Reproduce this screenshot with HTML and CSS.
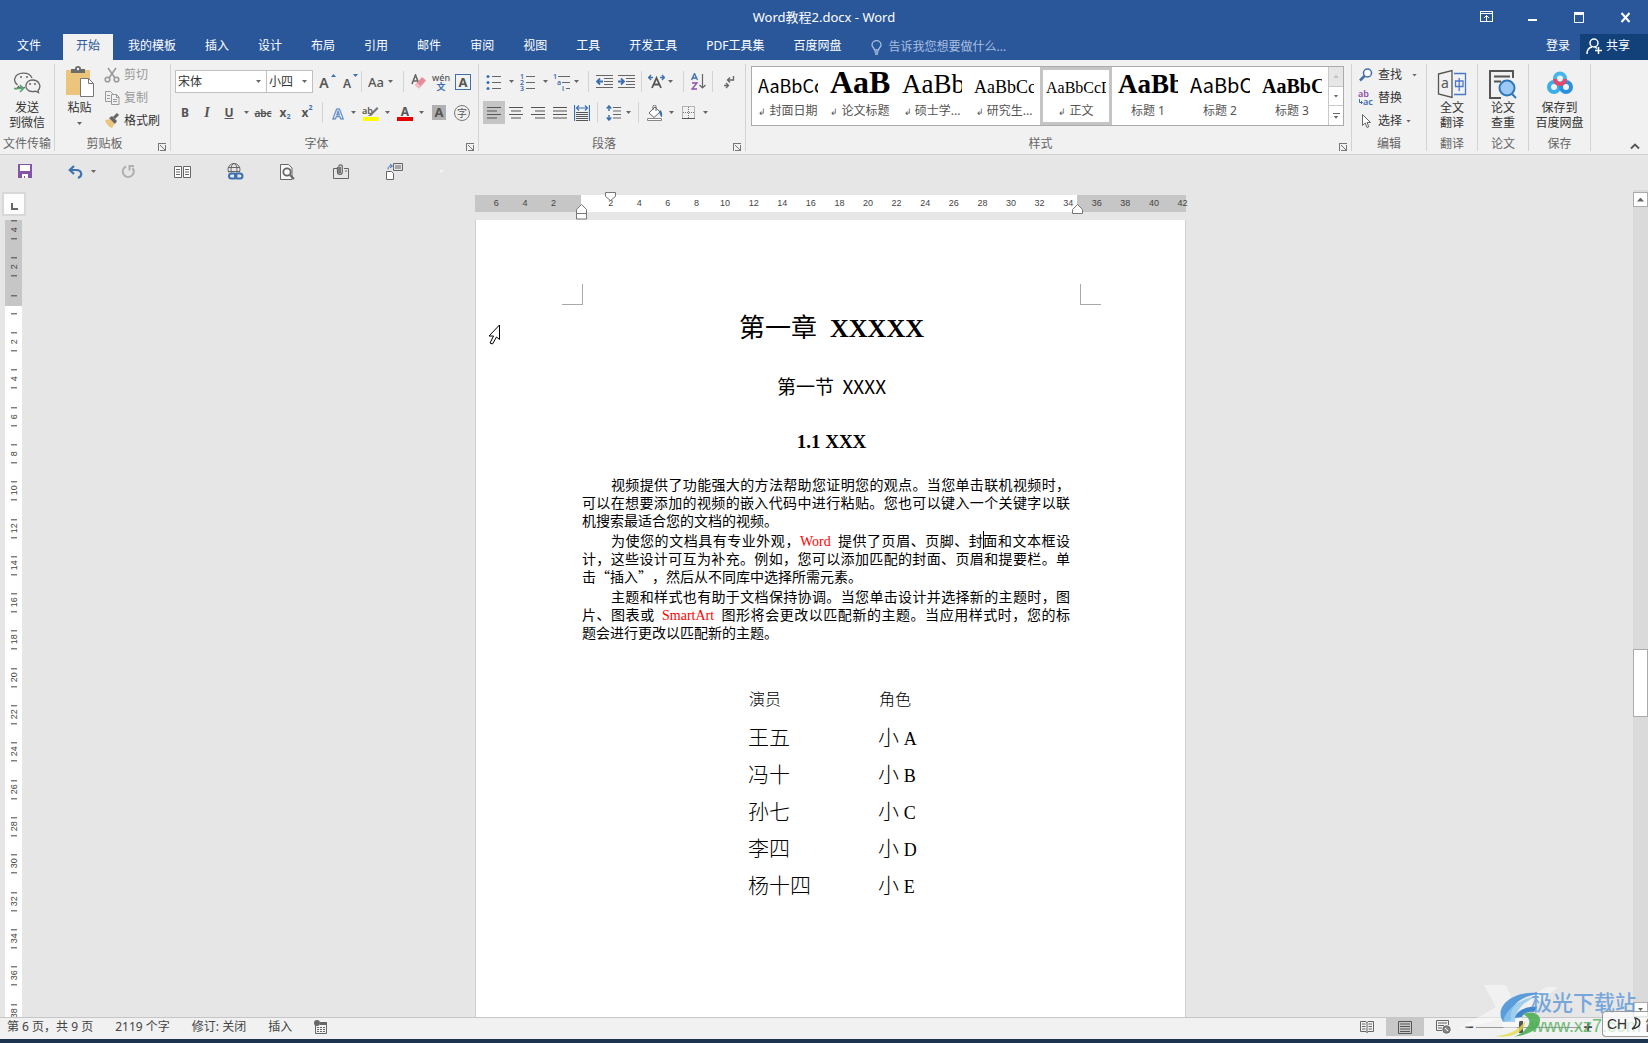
FILE: index.html
```html
<!DOCTYPE html>
<html lang="zh-CN">
<head>
<meta charset="utf-8">
<title>Word教程2.docx - Word</title>
<link rel="stylesheet" href="styles.css">
</head>
<body>
<header class="top">
  <div class="titlebar">
    <span></span>
    <h1 class="title">Word教程2.docx - Word</h1>
    <div class="winbtns">
      <button aria-label="功能区显示选项"><svg width="14" height="12" viewBox="0 0 14 12" fill="none" stroke="#fff"><rect x=".5" y=".5" width="12" height="10"/><path d="M1 2.500h11M6.500 10V4.500M4 7l2.500-2.500L9 7"/></svg></button>
      <button aria-label="最小化"><svg width="10" height="12" viewBox="0 0 10 12"><path d="M0 8h9v2H0z" fill="#fff"/></svg></button>
      <button aria-label="最大化"><svg width="11" height="11" viewBox="0 0 11 11"><path d="M.5 1.500h9v9h-9z" fill="none" stroke="#fff"/><path d="M0 0h10v3H0z" fill="#fff"/></svg></button>
      <button aria-label="关闭"><svg width="11" height="11" viewBox="0 0 11 11"><path d="M1.500 1l8 9M9.500 1l-8 9" stroke="#fff" stroke-width="2"/></svg></button>
    </div>
  </div>
  <nav class="tabs">
    <button class="tab file">文件</button>
    <button class="tab active">开始</button>
    <button class="tab">我的模板</button>
    <button class="tab">插入</button>
    <button class="tab">设计</button>
    <button class="tab">布局</button>
    <button class="tab">引用</button>
    <button class="tab">邮件</button>
    <button class="tab">审阅</button>
    <button class="tab">视图</button>
    <button class="tab">工具</button>
    <button class="tab">开发工具</button>
    <button class="tab">PDF工具集</button>
    <button class="tab">百度网盘</button>
    <label class="tell">
      <svg width="11" height="15" viewBox="0 0 11 15" fill="none" stroke="#a9bfe0" stroke-width="1.300"><path d="M3.500 10C3.500 8 1 7.500 1 5a4.500 4.300 0 0 1 9 0c0 2.500-2.500 3-2.500 5zM3.500 12h4M4 14h3"/></svg>
      <input type="text" placeholder="告诉我您想要做什么..." aria-label="告诉我您想要做什么">
    </label>
    <button class="login">登录</button>
    <button class="share"><svg width="17" height="17" viewBox="0 0 17 17" fill="none" stroke="#fff" stroke-width="1.500"><circle cx="8" cy="5" r="4"/><path d="M1 16c0-4 2-6.500 5-7M9 9l2 1.500M12.500 9v7M9 12.500h7"/></svg>共享</button>
  </nav>
</header>

<section class="ribbon" aria-label="开始">
  <div class="group g-send">
    <button class="big">
      <svg width="28" height="28" viewBox="0 0 28 28" fill="none" stroke="#666" stroke-width="1.300"><path d="M6 16l-2 2.500 4-1.500c1.500.6 3 .7 4 .5M4.500 15C2 13 1 10.500 2 8c2-6 14-7 17 0"/><path d="M25 20.500c4-4 1-10.500-5.500-10.500-8 0-9 10.500-1 11.500 1.500.2 3 0 4-.4l3 1.400z"/><path d="M1 18.500h9M7 15l3.500 3.500L7 22" stroke="#58a66a" stroke-width="1.500"/><g fill="#666" stroke="none"><circle cx="8" cy="7" r="1"/><circle cx="14" cy="7" r="1"/><circle cx="17" cy="14" r="1"/><circle cx="22" cy="14" r="1"/></g></svg>
      <span>发送<br>到微信</span>
    </button>
    <div class="glabel">文件传输</div>
  </div>

  <div class="group g-clip">
    <div class="gbody">
      <button class="big paste">
        <svg width="30" height="32" viewBox="0 0 30 32"><path d="M1 4h24v25H1z" fill="#ecc57c"/><path d="M6 7V3h4a3 3 0 0 1 6 0h4v4z" fill="#6b6b6b"/><circle cx="13" cy="3" r="1.200" fill="#f1f1f1"/><path d="M15.500 12.500h8l5 5v13h-13z" fill="#fff" stroke="#777"/><path d="M23.500 12.500v5h5" fill="none" stroke="#777"/></svg>
        <span>粘贴</span><i class="caret"></i>
      </button>
      <div class="stack">
        <button class="row dim"><svg width="16" height="16" viewBox="0 0 16 16" fill="none" stroke="#9a9a9a" stroke-width="1.600"><path d="M4 1l7 10M12 1L5 11"/><circle cx="3.500" cy="12.500" r="2.300"/><circle cx="12.500" cy="12.500" r="2.300"/></svg>剪切</button>
        <button class="row dim"><svg width="16" height="16" viewBox="0 0 16 16" fill="none" stroke="#9a9a9a"><path d="M1.500 1.500h5l2 2v8h-7zM3 5.500h3M3 8.500h3"/><path d="M7.500 4.500h5l2.500 2.500v7.500H7.500z" fill="#f1f1f1"/><path d="M9 9.500h4M9 11.500h4M12.500 4.500v3h2.500"/></svg>复制</button>
        <button class="row"><svg width="16" height="16" viewBox="0 0 16 16"><path d="M1 7l6-1 4 4-3 5C5 14 2 11 1 7z" fill="#ecc57c"/><path d="M5 5l3-2 5 5-2 3z" fill="#666"/><path d="M10 5l4-4" stroke="#666" stroke-width="3"/></svg>格式刷</button>
      </div>
    </div>
    <div class="glabel">剪贴板</div><button class="launch" aria-label="剪贴板设置"></button>
  </div>

  <div class="group g-font">
    <div class="tools">
      <div class="trow">
        <span class="combo family"><select aria-label="字体"><option>宋体</option></select></span><span class="combo size"><select aria-label="字号"><option>小四</option></select></span>
        <button class="t w24" aria-label="增大字号"><span class="glyph">A</span><i class="up"></i></button>
        <button class="t" aria-label="减小字号"><span class="glyph sm">A</span><i class="down"></i></button>
        <i class="sep s1"></i>
        <button class="t w20" aria-label="更改大小写"><span class="plain">Aa</span></button><i class="caret c"></i>
        <i class="sep s2"></i>
        <button class="t" aria-label="清除所有格式"><svg width="16" height="16" viewBox="0 0 16 16"><path d="M1 10L4.500 1 8 10M2.500 7h4" fill="none" stroke="#666" stroke-width="1.600"/><path d="M4 11l7-8 4 3.500-7 8z" fill="#e88a9b"/><path d="M4 11l2-2.300 4 3.500-2 2.300z" fill="#f4bcc6"/></svg></button>
        <button class="t pinyin" aria-label="拼音指南"><span>wén</span><b>文</b></button>
        <button class="t" aria-label="字符边框"><span class="boxed">A</span></button>
      </div>
      <div class="trow">
        <button class="t bold">B</button><button class="t ital">I</button><button class="t und">U</button><i class="caret c12"></i>
        <button class="t strike">abc</button><button class="t sub">x<small>2</small></button><button class="t sup">x<small>2</small></button>
        <i class="sep"></i>
        <button class="t fx">A</button><i class="caret c"></i>
        <button class="t w24" aria-label="突出显示"><svg width="18" height="18" viewBox="0 0 18 18"><text x="0" y="10" class="svgt">ab</text><path d="M6 12l9-9 1.500 1.500L9 12z" fill="#777"/><path d="M1 13h16v4H1z" fill="#ff0"/></svg></button><i class="caret c"></i>
        <button class="t w24" aria-label="字体颜色"><span class="fcolor">A</span></button><i class="caret c"></i>
        <button class="t w24" aria-label="字符底纹"><span class="shade">A</span></button>
        <button class="t" aria-label="带圈字符"><span class="ring">字</span></button>
      </div>
    </div>
    <div class="glabel">字体</div><button class="launch" aria-label="字体设置"></button>
  </div>

  <div class="group g-para">
    <div class="tools">
      <div class="trow">
        <button class="t" aria-label="项目符号"><svg width="16" height="16" viewBox="0 0 16 16"><path d="M6 2.500h9M6 8.500h9M6 14.500h9" stroke="#666"/><g fill="#3a6fb0"><circle cx="2" cy="2.500" r="1.500"/><circle cx="2" cy="8.500" r="1.500"/><circle cx="2" cy="14.500" r="1.500"/></g></svg></button><i class="caret c12"></i>
        <button class="t" aria-label="编号"><svg width="16" height="18" viewBox="0 0 16 18"><path d="M6 3.500h9M6 9.500h9M6 15.500h9" stroke="#666"/><g class="nums"><text x="0" y="6">1</text><text x="0" y="12">2</text><text x="0" y="18">3</text></g></svg></button><i class="caret c12"></i>
        <button class="t" aria-label="多级列表"><svg width="18" height="18" viewBox="0 0 18 18"><path d="M5 3.500h12M9 9.500h8M13 15.500h4" stroke="#666"/><g class="nums"><text x="0" y="6">1</text><text x="4" y="12">a</text><text x="9" y="18">i</text></g></svg></button><i class="caret c8"></i>
        <i class="sep s3"></i>
        <button class="t" aria-label="减少缩进"><svg width="17" height="14" viewBox="0 0 17 14"><path d="M0 .5h17M8 3.500h9M8 6.500h9M8 9.500h9M0 12.500h17" stroke="#666"/><path d="M7 6.500H1M4 3.500L1 6.500l3 3" fill="none" stroke="#3a6fb0" stroke-width="1.800"/></svg></button>
        <button class="t" aria-label="增加缩进"><svg width="17" height="14" viewBox="0 0 17 14"><path d="M0 .5h17M8 3.500h9M8 6.500h9M8 9.500h9M0 12.500h17" stroke="#666"/><path d="M0 6.500h6M3 3.500l3 3-3 3" fill="none" stroke="#3a6fb0" stroke-width="1.800"/></svg></button>
        <i class="sep"></i>
        <button class="t w20" aria-label="中文版式"><svg width="17" height="15" viewBox="0 0 17 15" fill="none"><path d="M4 14L8.500 4 13 14M5.500 10.500h6" stroke="#555" stroke-width="1.800"/><path d="M0 3.500h5M3 1L.7 3.500 3 6M12 3.500h5M14 1l2.300 2.500L14 6" stroke="#3a6fb0" stroke-width="1.300"/></svg></button><i class="caret c"></i>
        <i class="sep s3"></i>
        <button class="t w20" aria-label="排序"><svg width="15" height="17" viewBox="0 0 15 17" fill="none"><path d="M.5 7L3.500.5 6.500 7M1.500 5h4" stroke="#3a6fb0" stroke-width="1.300"/><path d="M1 10h5l-5 6h5" stroke="#8b4fa6" stroke-width="1.300"/><path d="M11.500 1v14M8.500 12l3 3 3-3" stroke="#666" stroke-width="1.200"/></svg></button>
        <i class="sep"></i>
        <button class="t w24" aria-label="显示编辑标记"><svg width="12" height="14" viewBox="0 0 12 14" fill="none" stroke="#666" stroke-width="1.300"><path d="M10.500 1v4H4.500M7 2.500L4.500 5 7 7.500M1 10.500h4M3 8l2.500 2.500L3 13"/></svg></button>
      </div>
      <div class="trow">
        <button class="t on" aria-label="左对齐"><svg width="14" height="12" viewBox="0 0 14 12"><path d="M0 .5h14M0 4h10M0 7.500h14M0 11h10" stroke="#555"/></svg></button>
        <button class="t" aria-label="居中"><svg width="14" height="12" viewBox="0 0 14 12"><path d="M0 .5h14M2 4h10M0 7.500h14M2 11h10" stroke="#555"/></svg></button>
        <button class="t" aria-label="右对齐"><svg width="14" height="12" viewBox="0 0 14 12"><path d="M0 .5h14M4 4h10M0 7.500h14M4 11h10" stroke="#555"/></svg></button>
        <button class="t" aria-label="两端对齐"><svg width="14" height="12" viewBox="0 0 14 12"><path d="M0 .5h14M0 4h14M0 7.500h14M0 11h14" stroke="#555"/></svg></button>
        <button class="t" aria-label="分散对齐"><svg width="16" height="16" viewBox="0 0 16 16" fill="none"><path d="M.5 0v16M15.500 0v16M2 3h12M5 .5L2.500 3 5 5.500M11 .5L13.500 3 11 5.500" stroke="#3a6fb0" stroke-width="1.200"/><path d="M2 7.500h12M2 9.500h12M2 11.500h12M2 13.500h12M2 15.500h12" stroke="#555"/></svg></button>
        <i class="sep"></i>
        <button class="t" aria-label="行距"><svg width="15" height="16" viewBox="0 0 15 16" fill="none"><path d="M3 1v5M.7 3.500L3 1l2.300 2.500M3 10v5M.7 12.500L3 15l2.300-2.500" stroke="#3a6fb0" stroke-width="1.500"/><path d="M7 2.500h8M7 6h8M7 9.500h8M7 13h8" stroke="#666"/></svg></button><i class="caret c"></i>
        <i class="sep"></i>
        <button class="t w24" aria-label="底纹"><svg width="16" height="16" viewBox="0 0 16 16"><path d="M2 8l6-6 5 5-6 5.500z" fill="#fff" stroke="#666"/><path d="M6 5V1.500a1.500 1.500 0 0 1 3 0V6" fill="none" stroke="#666"/><path d="M13 5c2 1 2.500 4 2 7-1 0-2-2-3-5z" fill="#3a6fb0"/><path d="M.5 13.500h14v2H.5z" fill="#fff" stroke="#888"/></svg></button><i class="caret c"></i>
        <button class="t w24" aria-label="边框"><svg width="14" height="14" viewBox="0 0 14 14" fill="none" stroke="#777"><path d="M.5.500h12v12H.500zM6.500 1v12M1 6.500h12" stroke-dasharray="1 1"/><path d="M0 12.500h13" stroke="#555"/></svg></button><i class="caret c"></i>
      </div>
    </div>
    <div class="glabel">段落</div><button class="launch" aria-label="段落设置"></button>
  </div>

  <div class="group g-style">
    <div class="gallery">
      <button class="style"><span class="sample"><b class="s-sans18">AaBbCc</b></span><span class="sname"><em>↲</em> 封面日期</span></button>
      <button class="style"><span class="sample"><b class="s-b32">AaB</b></span><span class="sname"><em>↲</em> 论文标题</span></button>
      <button class="style"><span class="sample"><b class="s-r27">AaBb</b></span><span class="sname"><em>↲</em> 硕士学...</span></button>
      <button class="style"><span class="sample"><b class="s-r18">AaBbCc</b></span><span class="sname"><em>↲</em> 研究生...</span></button>
      <button class="style sel"><span class="sample"><b class="s-r16">AaBbCcD</b></span><span class="sname"><em>↲</em> 正文</span></button>
      <button class="style"><span class="sample"><b class="s-b27">AaBb</b></span><span class="sname">标题 1</span></button>
      <button class="style"><span class="sample"><b class="s-sans20">AaBbC</b></span><span class="sname">标题 2</span></button>
      <button class="style"><span class="sample"><b class="s-b20">AaBbC</b></span><span class="sname">标题 3</span></button>
      <div class="gnav"><button class="off" aria-label="上一行"><i class="tri"></i></button><button aria-label="下一行"><i class="caret"></i></button><button class="more" aria-label="更多样式"><i class="caret"></i></button></div>
    </div>
    <div class="glabel">样式</div><button class="launch" aria-label="样式设置"></button>
  </div>

  <div class="group g-edit">
    <div class="stack">
      <button class="row"><svg width="16" height="16" viewBox="0 0 16 16" fill="none" stroke="#3f6fa8"><circle cx="9.500" cy="6" r="4" stroke-width="1.500" fill="#fff"/><path d="M6.500 9L2 13.500" stroke-width="2.500"/></svg>查找<i class="caret far"></i></button>
      <button class="row"><svg width="16" height="16" viewBox="0 0 16 16"><text x="0" y="7" class="svgt pur">ab</text><text x="5" y="15" class="svgt blu">ac</text><path d="M1.500 9v3.500h3M3 11l1.500 1.500L3 14" fill="none" stroke="#3a6fb0"/></svg>替换</button>
      <button class="row"><svg width="16" height="16" viewBox="0 0 16 16"><path d="M4.500 1.500v11l2.700-2.500 1.800 4.500 1.800-.8-1.800-4.200h3.500z" fill="#fff" stroke="#666"/></svg>选择<i class="caret"></i></button>
    </div>
    <div class="glabel">编辑</div>
  </div>
  <div class="group g-trans">
    <button class="big"><svg width="30" height="30" viewBox="0 0 30 30" fill="none"><path d="M1.500 5L15 1.500v27L1.500 25z" stroke="#555" stroke-width="1.300"/><path d="M17 4.500h11.500v21H17" stroke="#4a78c8" stroke-width="1.300"/><text x="4" y="19" class="ta">a</text><path d="M18.500 12h7.500v5.500h-7.500zM22.200 9v13" stroke="#4a78c8" stroke-width="1.300"/></svg><span>全文<br>翻译</span></button>
    <div class="glabel">翻译</div>
  </div>
  <div class="group g-paper">
    <button class="big"><svg width="30" height="30" viewBox="0 0 30 30" fill="none" stroke="#555" stroke-width="2"><path d="M25 9V2H2v27h11M6 7.500h16M6 12.500h7"/><circle cx="19" cy="19" r="7.500" fill="#9cc9f5" stroke="#2f77b8"/><path d="M24 25l4 4" stroke="#2f77b8"/></svg><span>论文<br>查重</span></button>
    <div class="glabel">论文</div>
  </div>
  <div class="group g-save">
    <button class="big"><svg width="28" height="26" viewBox="0 0 28 26" fill="none" stroke-width="4"><circle cx="8" cy="16" r="5" stroke="#3aaee8"/><circle cx="20" cy="16" r="5" stroke="#2b90e0"/><circle cx="14" cy="7.500" r="5" stroke="#45b5ea"/><path d="M9 8a5 5 0 0 0 10 0" stroke="#e8476a"/></svg><span>保存到<br>百度网盘</span></button>
    <div class="glabel">保存</div>
  </div>
  <button class="collapse" aria-label="折叠功能区"><svg width="10" height="7" viewBox="0 0 10 7"><path d="M1 5.500l4-4 4 4" fill="none" stroke="#555" stroke-width="1.800"/></svg></button>
</section>

<div class="qat">
  <button aria-label="保存"><svg width="15" height="15" viewBox="0 0 15 15"><path d="M0 0h14v14H0z" fill="#8455a6"/><path d="M2 1h10v6H2zM4 10h6v4H7v-2H6v2H4z" fill="#fff"/></svg></button>
  <button aria-label="撤销"><svg width="15" height="14" viewBox="0 0 15 14" fill="none" stroke="#3f72ae" stroke-width="2.200"><path d="M6 1L1.800 5 6 9M2 5h6c6 0 7 6 2 8"/></svg><i class="caret"></i></button>
  <button aria-label="重复"><svg width="15" height="15" viewBox="0 0 15 15" fill="none" stroke="#b0b0b0" stroke-width="2"><path d="M5 2.500A5.500 5.500 0 1 0 11.500 4M13 2H8.500v4.500"/></svg></button>
  <button aria-label="阅读"><svg width="17" height="12" viewBox="0 0 17 12" fill="#fff" stroke="#666"><path d="M.5.500h7v11h-7zM9.500.500h7v11h-7z"/><path d="M2 3.500h4M2 6h4M2 8.500h4M11 3.500h4M11 6h4M11 8.500h4"/></svg></button>
  <button aria-label="超链接"><svg width="17" height="17" viewBox="0 0 17 17" fill="none" stroke="#666"><circle cx="7" cy="6.500" r="6"/><ellipse cx="7" cy="6.500" rx="3" ry="6"/><path d="M1 4.500h12M1 8.500h12"/><path d="M0 9.500h17V17H0z" fill="#e6e6e6" stroke="none"/><g stroke="#3a6fb0" stroke-width="2"><rect x="2" y="10.500" width="7.500" height="5" rx="2.500"/><rect x="8" y="10.500" width="7.500" height="5" rx="2.500"/></g></svg></button>
  <button aria-label="打印预览"><svg width="15" height="16" viewBox="0 0 15 16" fill="none" stroke="#666"><path d="M.5.500h8l3.500 3.500v11.500H.500z" fill="#f8f8f8"/><circle cx="7" cy="8" r="3.700" stroke-width="1.800"/><path d="M10 11l4 4" stroke-width="2"/></svg></button>
  <button aria-label="附件"><svg width="16" height="16" viewBox="0 0 16 16" fill="none" stroke="#666"><path d="M4 4.500H.500v10h15v-10H11M12 7h2" /><path d="M4.500 3v5a2.300 2.300 0 0 0 4.800 0V2.500a1.700 1.700 0 0 0-3.400 0V8a.7.700 0 0 0 1.400 0V3" stroke-width="1.200"/></svg></button>
  <button aria-label="导出"><svg width="17" height="17" viewBox="0 0 17 17" fill="none" stroke="#666"><path d="M.5 8.500h5l2 2v6h-7z" fill="#fff"/><path d="M7.500.500h9v7h-9zM9 3h6M9 5h6"/><path d="M2 6.500c0-3 1.500-4 4-3.500M4 1l2.500 2L4 5" stroke="#3a6fb0"/></svg></button>
  <button aria-label="自定义快速访问工具栏"><i class="caret pale"></i></button>
</div>

<main class="work">
  <div class="corner"><button aria-label="制表符"><i></i></button></div>
  <div class="hrule-wrap">
    <div class="hrule">
      <div class="hband"></div>
      <div class="hnums"><span>6</span><span>4</span><span>2</span><span></span><span>2</span><span>4</span><span>6</span><span>8</span><span>10</span><span>12</span><span>14</span><span>16</span><span>18</span><span>20</span><span>22</span><span>24</span><span>26</span><span>28</span><span>30</span><span>32</span><span>34</span><span>36</span><span>38</span><span>40</span><span>42</span></div>
      <svg class="mark first" width="12" height="9" viewBox="0 0 12 9"><path d="M.5.500h10v4l-5 4-5-4z" fill="#fff" stroke="#777"/></svg>
      <svg class="mark hang" width="12" height="16" viewBox="0 0 12 16"><path d="M5.500.500l5 5v9.500h-10V5.500zM.5 9.500h10" fill="#fff" stroke="#777"/></svg>
      <svg class="mark right" width="12" height="10" viewBox="0 0 12 10"><path d="M5.500.500l5 5v4h-10v-4z" fill="#fff" stroke="#777"/></svg>
    </div>
  </div>
  <div class="vrule"><div class="vnums"><span>4</span><span>2</span><span></span><span>2</span><span>4</span><span>6</span><span>8</span><span>10</span><span>12</span><span>14</span><span>16</span><span>18</span><span>20</span><span>22</span><span>24</span><span>26</span><span>28</span><span>30</span><span>32</span><span>34</span><span>36</span><span>38</span></div></div>
  <div class="canvas">
    <article class="page">
      <div class="crops"><i></i><i></i></div>
      <h2 class="chapter">第一章&nbsp; <b>XXXXX</b></h2>
      <h3 class="section">第一节&nbsp; XXXX</h3>
      <h4 class="sub1">1.1 XXX</h4>
      <div class="prose">
        <p>视频提供了功能强大的方法帮助您证明您的观点。当您单击联机视频时，可以在想要添加的视频的嵌入代码中进行粘贴。您也可以键入一个关键字以联机搜索最适合您的文档的视频。</p>
        <p>为使您的文档具有专业外观，<span class="hot">Word</span>&nbsp; 提供了页眉、页脚、封<span class="ibeam"></span>面和文本框设计，这些设计可互为补充。例如，您可以添加匹配的封面、页眉和提要栏。单击“插入”，然后从不同库中选择所需元素。</p>
        <p>主题和样式也有助于文档保持协调。当您单击设计并选择新的主题时，图片、图表或&nbsp; <span class="hot">SmartArt</span>&nbsp; 图形将会更改以匹配新的主题。当应用样式时，您的标<span class="keep">题会进</span>行更改以匹配新的主题。</p>
      </div>
      <table class="cast">
        <thead><tr><th>演员</th><th>角色</th></tr></thead>
        <tbody>
          <tr><td>王五</td><td>小 <span>A</span></td></tr>
          <tr><td>冯十</td><td>小 <span>B</span></td></tr>
          <tr><td>孙七</td><td>小 <span>C</span></td></tr>
          <tr><td>李四</td><td>小 <span>D</span></td></tr>
          <tr><td>杨十四</td><td>小 <span>E</span></td></tr>
        </tbody>
      </table>
      <svg class="pointer" width="13" height="21" viewBox="0 0 13 21"><path d="M11.500 1v14.500L8.500 13l-4 7-2.500-1 3.500-7H1z" fill="#fff" stroke="#000"/></svg>
    </article>
  </div>
  <div class="scroll"><button aria-label="向上滚动"><i class="tri"></i></button><i class="thumb"></i><button aria-label="向下滚动"><i class="caret"></i></button></div>
</main>

<footer class="status">
  <span>第 6 页，共 9 页</span><span>2119 个字</span><span>修订: 关闭</span><span>插入</span>
  <svg width="14" height="14" viewBox="0 0 14 14" fill="none" stroke="#666"><path d="M1.500 5v8.500h11v-11H6"/><path d="M3 7.500h8M3 9.500h8M3 11.500h8" stroke-dasharray="2 1"/><path d="M6 2h7v3H6z" fill="#666" stroke="none"/><circle cx="3" cy="3" r="3" fill="#666" stroke="none"/></svg>
  <div class="views">
    <button aria-label="阅读视图"><svg width="14" height="14" viewBox="0 0 14 14" fill="none" stroke="#666"><path d="M.5 1.500H6l1 1 1-1h5.500v10H8l-1 1-1-1H.500zM7 2v11M2 4h3.500M2 6.500h3.500M2 9h3.500M8.500 4H12M8.500 6.500H12M8.500 9H12"/></svg></button>
    <button class="on" aria-label="页面视图"><svg width="14" height="13" viewBox="0 0 14 13" fill="none" stroke="#555"><path d="M.5.500h13v12H.500zM2 3h10M2 5.500h10M2 8h10M2 10.500h10"/></svg></button>
    <button aria-label="Web 版式"><svg width="15" height="14" viewBox="0 0 15 14" fill="none" stroke="#666"><path d="M6 10.500H.500V.500h12V5M2 3h9M2 5.500h6M2 8h4"/><circle cx="10.500" cy="9.500" r="3.700" fill="#888"/><path d="M9 8l3 3" stroke="#fff"/></svg></button>
    <button class="zoom" aria-label="缩小">−</button>
    <input class="slider" type="range" min="0" max="100" value="43" aria-label="缩放级别">
    <button class="zoom" aria-label="放大">+</button>
  </div>
</footer>
<div class="taskbar"></div>

<aside class="mark-site">
  <svg width="190" height="54" viewBox="0 0 190 54"><path d="M26 0h22l10 22 30-20h12L64 32l-6 12h-12l-4-10L4 44 0 44l38-22z" fill="#fff" opacity=".45"/><g transform="translate(-7 -1)"><path d="M52 38C42 22 64 4 92 10c-22 0-34 12-32 26z" fill="#4a93d8" opacity=".9"/><path d="M52 38c2-12 16-24 36-26-14 4-24 14-24 26z" fill="#8cc8ee" opacity=".8"/><path d="M64 34c2-8 12-12 22-11l-3 5c-6-1-10 1-12 5z" fill="#3f86cf"/><path d="M72 30c8-3 16-1 17 5 1 10-12 16-26 18 10-5 17-11 15-17-1-3-3-4-6-6z" fill="#4fae57" opacity=".9"/><path d="M44 52c14-1 24-6 30-15 1 10-12 18-30 15z" fill="#e4dc50" opacity=".8"/></g></svg>
  <div class="site"><strong>极光下载站</strong><span>www.xz7.com</span></div>
  <div class="ime">CH<svg width="12" height="14" viewBox="0 0 12 14" fill="none" stroke="#333" stroke-width="1.300"><path d="M5 1c6 1 8 9-3 11 4-3 5-7 3-11z"/></svg>简</div>
</aside>
</body>
</html>
```
FILE: styles.css
```css
* { box-sizing: border-box; }
html, body { height: 100%; }
body {
  margin: 0;
  display: flex;
  flex-direction: column;
  overflow: hidden;
  position: relative;
  background: #e6e6e6;
  color: #444;
  font: 12px/16px "Noto Sans", "Noto Sans CJK SC", sans-serif;
}
button, input, select { font: inherit; color: inherit; }
button { border: 0; padding: 0; background: none; white-space: nowrap; }
i, em { font-style: normal; }
h1, h2, h3, h4, p { margin: 0; font-weight: 400; }
svg { display: block; flex: none; }

/* title and tabs */
.top { background: #2a579a; color: #fff; }
.titlebar { display: grid; grid-template-columns: 1fr auto 1fr; height: 34px; align-items: center; }
.title { font-size: 13px; line-height: 32px; }
.winbtns { display: flex; justify-content: flex-end; }
.winbtns button { width: 46px; height: 32px; display: grid; place-items: center; }
.tabs { display: flex; height: 26px; gap: 1px; line-height: 20px; }
.tab { padding: 0 14px 2px; }
.tab.file { padding: 0 21px 2px 17px; }
.tab.active { padding: 0 13px 2px; background: #f1f1f1; color: #2a579a; }
.tell { display: flex; flex: 1; align-items: center; gap: 6px; padding-left: 15px; }
.tell input { flex: 1; min-width: 0; border: 0; padding: 0; background: none; }
.tell input::placeholder { color: #a9bfe0; }
.login { padding: 0 9px 2px; }
.share { display: flex; align-items: center; gap: 3px; width: 68px; padding: 0 0 2px 6px; background: #124078; }

/* ribbon */
.ribbon { display: flex; height: 95px; padding-top: 4px; background: #f1f1f1; border-bottom: 1px solid #d0d0d0; }
.group { position: relative; display: flex; flex-direction: column; height: 87px; border-right: 1px solid #d2d2d2; flex: none; }
.glabel { margin-top: auto; height: 15px; text-align: center; color: #666; white-space: nowrap; }
.g-send { width: 55px; }
.g-clip { width: 116px; }
.g-font { width: 308px; }
.g-para { width: 267px; }
.g-style { width: 606px; flex: 0 1 606px; }
.g-edit { width: 75px; }
.g-trans { width: 51px; }
.g-paper { width: 51px; }
.g-save { width: 62px; }
.g-clip .glabel, .g-font .glabel, .g-para .glabel, .g-style .glabel { padding-right: 16px; }
.launch { position: absolute; right: 4px; bottom: 0; width: 8px; height: 8px; border: 1px solid #777; border-width: 1px 0 0 1px; }
.launch::after { content: ""; position: absolute; right: 0; bottom: 0; width: 5px; height: 5px; border: 1px solid #777; border-width: 0 1px 1px 0; background: linear-gradient(45deg, transparent 42%, #777 42%, #777 58%, transparent 58%); transform: scaleX(-1) rotate(90deg); }
.big { display: flex; flex-direction: column; align-items: center; line-height: 15px; padding-top: 4px; }
.big svg { height: 32px; }
.big span { text-align: center; color: #333; }
.gbody { display: flex; }
.paste { width: 49px; padding: 2px 0 0; }
.paste span { padding-top: 2px; }
.paste .caret { margin-top: 7px; }
.caret { display: block; flex: none; width: 5px; height: 3px; background: #666; clip-path: polygon(0 0, 100% 0, 50% 100%); }
.caret.pale { background: #f4f4f4; }
.tri { display: block; width: 7px; height: 4px; background: #666; clip-path: polygon(50% 0, 100% 100%, 0 100%); }
.stack { display: flex; flex-direction: column; gap: 1px; }
.row { display: flex; align-items: center; gap: 4px; height: 22px; color: #333; }
.row.dim { color: #999; }
.far { margin-left: 6px; }
.g-edit .stack { padding-left: 6px; }
.collapse { margin: 0 8px 4px auto; align-self: flex-end; }

.tools { padding: 6px 0 0 3px; display: flex; flex-direction: column; gap: 8px; }
.g-para .tools { padding-left: 4px; }
.trow { display: flex; height: 23px; align-items: center; }
.t { position: relative; width: 22px; height: 23px; display: flex; align-items: center; justify-content: center; flex: none; color: #555; font-weight: 700; }
.t.w24 { width: 24px; }
.t.w20 { width: 20px; }
.t.on { background: #c5c5c5; }
.c { margin: 0 3px 0 2px; }
.c12 { margin: 0 3px 0 4px; }
.c8 { margin: 0 2px 0 1px; }
.sep { width: 1px; height: 21px; margin: 0 4px; background: #d4d4d4; flex: none; }
.s1 { margin: 0 4px 0 2px; }
.s2 { margin: 0 4px 0 7px; }
.s3 { margin: 0 4px 0 7px; }
.combo { position: relative; height: 23px; border: 1px solid #bfbfbf; background: #fff; }
.combo.family { width: 92px; margin-left: 1px; }
.combo.size { width: 47px; margin-left: -1px; }
.combo select { appearance: none; width: 100%; height: 21px; border: 0; padding: 0 2px; background: none; color: #333; }
.combo::after { content: ""; position: absolute; right: 5px; top: 9px; width: 5px; height: 3px; background: #666; clip-path: polygon(0 0, 100% 0, 50% 100%); }
.glyph { font-size: 14px; padding: 2px 2px 0 0; font-weight: 600; }
.glyph.sm { font-size: 12px; padding-top: 4px; }
.up, .down { position: absolute; right: 1px; top: 4px; width: 5px; height: 3px; background: #3a6fb0; clip-path: polygon(50% 0, 100% 100%, 0 100%); }
.down { clip-path: polygon(0 0, 100% 0, 50% 100%); }
.plain { font-weight: 500; font-size: 13px; }
.pinyin { flex-direction: column; line-height: 9px; font-size: 9px; font-weight: 500; }
.pinyin b { color: #3a6fb0; }
.boxed { width: 16px; height: 16px; border: 1px solid #3f6fa8; line-height: 14px; text-align: center; font-size: 13px; }
.ital { font-style: italic; font-family: "Liberation Serif", serif; font-size: 14px; }
.und { text-decoration: underline; }
.strike { text-decoration: line-through; font-size: 10px; font-weight: 600; }
.sub small, .sup small { font-size: 7px; color: #3a6fb0; align-self: flex-end; line-height: 8px; padding-bottom: 3px; }
.sup small { align-self: flex-start; padding-top: 3px; }
.fx { color: #fff; font-size: 15px; -webkit-text-stroke: 1px #4a7dc0; }
.fcolor { width: 16px; height: 16px; line-height: 13px; text-align: center; border-bottom: 4px solid #e60000; margin-top: 1px; }
.shade { width: 14px; height: 15px; background: #b0b0b0; line-height: 15px; text-align: center; font-size: 13px; }
.ring { width: 16px; height: 16px; border: 1px solid #777; border-radius: 50%; line-height: 14px; text-align: center; font-size: 10px; font-weight: 400; }
.svgt { font: 600 9px "Noto Sans", sans-serif; fill: #555; }
.svgt.pur { fill: #8b4fa6; }
.svgt.blu { fill: #3a6fb0; }
.ta { font: 14px "Noto Sans", sans-serif; fill: #555; }
.nums { font: 600 7px "Noto Sans", sans-serif; fill: #3a6fb0; }

.gallery { display: flex; height: 60px; margin: 2px 7px 0 5px; border: 1px solid #ababab; background: #fff; overflow: hidden; }
.style { flex: 1 1 72px; min-width: 0; display: flex; flex-direction: column; align-items: center; }
.style.sel { box-shadow: inset 0 0 0 3px #c5c5c5; }
.sample { width: 60px; height: 35px; overflow: hidden; color: #000; font: 28px/34px "Liberation Serif", serif; text-align: left; }
.sample b { font-weight: 400; line-height: 20px; }
.sample .s-sans18 { font-family: "Noto Sans CJK SC", sans-serif; font-size: 18px; }
.sample .s-sans20 { font-family: "Noto Sans CJK SC", sans-serif; font-size: 20px; }
.s-b32 { font-size: 32px; }
.s-r27 { font-size: 27px; }
.s-r18 { font-size: 18px; }
.s-r16 { font-size: 16px; }
.s-b27 { font-size: 27px; }
.s-b20 { font-size: 20px; }
.sample .s-b32, .sample .s-b27, .sample .s-b20 { font-weight: 700; }
.sname { line-height: 18px; color: #555; }
.sname em { font-size: 9px; }
.gnav { width: 15px; display: flex; flex-direction: column; border-left: 1px solid #c8c8c8; }
.gnav button { flex: 1; display: grid; place-items: center; border-bottom: 1px solid #c8c8c8; }
.gnav button:last-child { border-bottom: 0; }
.gnav .off { background: #e6e6e6; }
.gnav .off .tri { width: 5px; height: 3px; background: #bbb; }
.gnav .more { align-content: center; gap: 2px; }
.gnav .more::before { content: ""; width: 7px; height: 1px; background: #666; }

/* quick access toolbar */
.qat { display: flex; height: 35px; padding: 0 0 2px 18px; flex: none; }
.qat button { width: 53px; display: flex; align-items: center; gap: 8px; }
.qat button:first-child { width: 50px; }

/* work area */
.work { flex: 1; min-height: 0; display: grid; grid-template-columns: 28px 1fr 15px; grid-template-rows: 30px 1fr; }
.corner button { display: grid; place-items: center; width: 24px; height: 24px; margin: 2px; background: #fdfdfd; border: 2px solid #d8d8d8; }
.corner i { width: 7px; height: 7px; border: 2px solid #666; border-width: 0 0 2px 2px; margin-top: 4px; }
.hrule-wrap { display: flex; justify-content: center; }
.hrule { position: relative; width: 711px; height: 17px; margin-top: 5px; }
.hband { height: 17px; background: linear-gradient(90deg, #c6c6c6 106px, #fff 106px, #fff 602px, #c6c6c6 602px); }
.hnums { position: absolute; inset: 0 auto 0 7px; width: 715px; display: flex; }
.hnums span { flex: 1; text-align: center; line-height: 17px; }
.hnums, .vnums { font-family: "Liberation Sans", Arial, sans-serif; font-size: 9px; color: #444; }
.mark { position: absolute; }
.first { left: 130px; top: -3px; }
.hang { left: 101px; top: 9px; }
.right { left: 597px; top: 9px; }
.vrule { grid-row: 2; margin-left: 5px; width: 17px; overflow: hidden; background: linear-gradient(#c6c6c6 86px, #fff 86px); }
.vnums { height: 821px; margin: -9px 0 0 1px; display: flex; flex-direction: column; }
.vnums span { flex: 1; display: flex; align-items: center; justify-content: space-between; writing-mode: vertical-rl; transform: rotate(180deg); padding: 9px 0; width: 17px; line-height: 17px; }
.vnums span::before, .vnums span::after { content: ""; width: 6px; height: 1px; background: #444; }
.canvas { grid-row: 2; min-height: 0; overflow: hidden; display: flex; justify-content: center; }
.scroll { grid-column: 3; grid-row: 1 / 3; display: flex; flex-direction: column; padding-top: 2px; background: #dadada; }
.scroll button { height: 15px; display: grid; place-items: center; background: #fff; border: 1px solid #ababab; }
.thumb { height: 68px; margin: 442px 0 auto; background: #fff; border: 1px solid #ababab; }

/* document */
.page { position: relative; width: 711px; min-height: 100%; background: #fff; border: 1px solid #cfcfcf; border-width: 0 1px; color: #000; font-family: "Noto Sans CJK SC", sans-serif; padding: 64px 84px 0 86px; }
.crops { display: flex; justify-content: space-between; height: 21px; }
.crops i { width: 21px; border: 1px solid #aaa; border-width: 0 1px 1px 0; }
.crops i:last-child { border-width: 0 0 1px 1px; }
.chapter { text-align: center; font-size: 26px; line-height: 44px; padding-top: 2px; font-family: "Liberation Serif", "Noto Sans CJK SC", serif; }
.chapter b { font-weight: 700; }
.section { text-align: center; font-size: 19px; line-height: 30px; margin-top: 20px; }
.sub1 { text-align: center; font: 700 19px/30px "Liberation Serif", serif; margin-top: 26px; }
.prose { padding: 18px 31px 0 20px; font-size: 14px; line-height: 18px; display: flex; flex-direction: column; gap: 2px; text-spacing-trim: space-all; }
.prose p { text-indent: 29px; text-align: justify; }
.hot { color: #f00; font-family: "Liberation Serif", serif; line-height: 12px; }
.keep { white-space: nowrap; }
.ibeam { position: absolute; width: 1px; height: 18px; background: #000; }
.cast { margin: 38px 0 0 186px; border-collapse: collapse; font-size: 21px; font-weight: 300; }
.cast th { height: 38px; font-size: 16px; font-weight: 300; text-align: left; padding: 0 0 0 1px; }
.cast td { height: 37px; width: 130px; padding: 0; line-height: 30px; }
.cast td span { font: 18px/18px "Liberation Serif", serif; }
.pointer { position: absolute; left: 12px; top: 104px; }

/* status bar */
.status { display: flex; align-items: center; gap: 22px; height: 22px; padding: 0 0 3px 7px; background: #f1f1f1; border-top: 1px solid #c6c6c6; flex: none; white-space: nowrap; }
.views { display: flex; align-self: stretch; align-items: center; margin-left: auto; padding-right: 53px; }
.views button { width: 38px; align-self: stretch; display: grid; place-items: center; }
.views .on { background: #c8c8c8; }
.views .zoom { width: 14px; font-size: 16px; font-weight: 700; }
.slider { appearance: none; width: 105px; height: 12px; margin: 0; background: linear-gradient(#999, #999) center / 100% 1px no-repeat; }
.slider::-webkit-slider-thumb { appearance: none; width: 4px; height: 12px; background: #555; }
.taskbar { height: 4px; background: #1c3450; flex: none; }

/* site badge over the lower right corner */
.mark-site { position: absolute; right: 0; bottom: 4px; width: 190px; height: 54px; }
.mark-site > svg { position: absolute; inset: 0; }
.site { position: absolute; left: 73px; top: 6px; display: flex; flex-direction: column; opacity: .8; white-space: nowrap; font-family: "Liberation Sans", "Noto Sans CJK SC", sans-serif; }
.site strong { color: #5b97d8; font-size: 21px; line-height: 24px; font-weight: 500; }
.site span { color: #4fae57; font-size: 18px; line-height: 22px; }
.ime { position: absolute; right: 0; bottom: 2px; width: 46px; height: 26px; display: flex; align-items: center; gap: 3px; padding-left: 4px; overflow: hidden; background: rgba(255, 255, 255, .7); border: 1px solid #999; border-right: 0; border-radius: 4px 0 0 4px; color: #333; font: 14px "Liberation Sans", "Noto Sans CJK SC", sans-serif; }
```
